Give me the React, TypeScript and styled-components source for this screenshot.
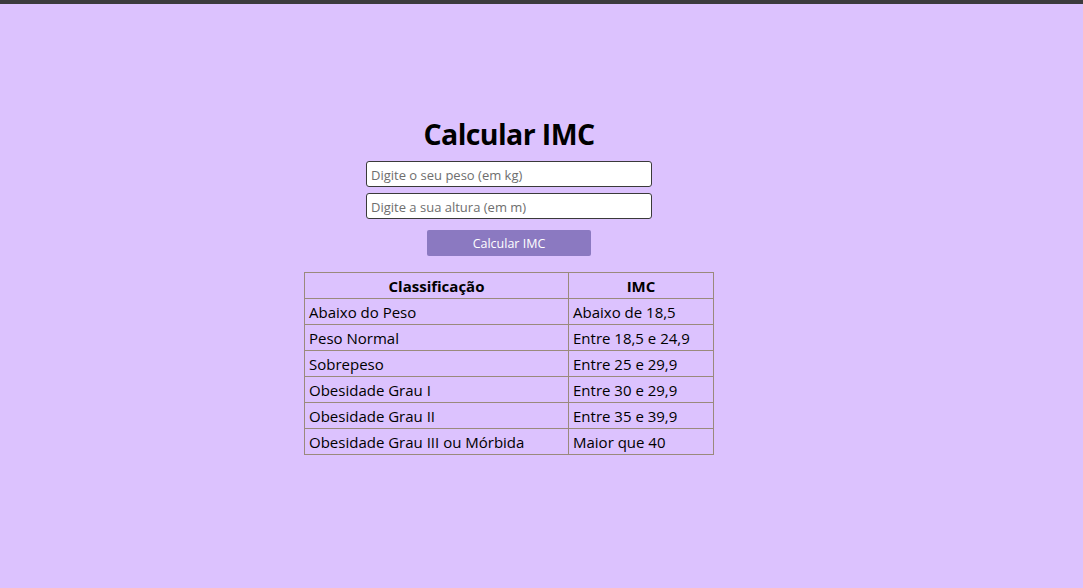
import React from "react";
import styled, { createGlobalStyle } from "styled-components";

const Global = createGlobalStyle`
  html, body { margin: 0; padding: 0; }
  body {
    background: #dcc2fe;
    font-family: "Open Sans", "Noto Sans", sans-serif;
    min-height: 588px;
  }
`;

const TopBar = styled.div`
  height: 4px;
  background: #3c3b3d;
`;

const Main = styled.main`
  display: flex;
  flex-direction: column;
  align-items: center;
  padding: 112px 65px 0 0;
`;

const Title = styled.h1`
  margin: 0 0 9px;
  font-size: 28.5px;
  font-weight: 700;
  line-height: 36px;
  color: #000;
  letter-spacing: -0.6px;
`;

const Form = styled.form`
  display: flex;
  flex-direction: column;
  align-items: center;
  gap: 6px;
`;

const Input = styled.input`
  box-sizing: border-box;
  width: 286px;
  height: 26px;
  border: 1px solid #3a3a3a;
  border-radius: 3px;
  padding: 1px 4px 0;
  font-family: "Open Sans", sans-serif;
  font-size: 13px;
  background: #fff;
  &::placeholder { color: #6e6e6e; }
`;

const Button = styled.button`
  margin-top: 5px;
  width: 164px;
  height: 26px;
  border: none;
  border-radius: 2px;
  background: #8b79c1;
  color: #fff;
  font-family: "Open Sans", sans-serif;
  font-size: 12.5px;
  padding-top: 1px;
`;

const Table = styled.table`
  margin-top: 16px;
  border-collapse: collapse;
  width: 410px;
  font-size: 15px;
  color: #000;
`;

const Th = styled.th<{ $w?: number }>`
  border: 1px solid #9a8a7c;
  height: 24px;
  padding: 1px 4px 0;
  line-height: 20px;
  font-weight: 700;
  text-align: center;
  width: ${(p) => (p.$w ? `${p.$w}px` : "auto")};
`;

const Td = styled.td`
  border: 1px solid #9a8a7c;
  height: 24px;
  padding: 1px 4px 0;
  line-height: 20px;
  text-align: left;
  white-space: nowrap;
`;

const rows: [string, string][] = [
  ["Abaixo do Peso", "Abaixo de 18,5"],
  ["Peso Normal", "Entre 18,5 e 24,9"],
  ["Sobrepeso", "Entre 25 e 29,9"],
  ["Obesidade Grau I", "Entre 30 e 29,9"],
  ["Obesidade Grau II", "Entre 35 e 39,9"],
  ["Obesidade Grau III ou Mórbida", "Maior que 40"],
];

export default function App() {
  return (
    <>
      <Global />
      <TopBar />
      <Main>
        <Title>Calcular IMC</Title>
        <Form onSubmit={(e) => e.preventDefault()}>
          <Input placeholder="Digite o seu peso (em kg)" />
          <Input placeholder="Digite a sua altura (em m)" />
          <Button type="submit">Calcular IMC</Button>
        </Form>
        <Table>
          <thead>
            <tr>
              <Th $w={255}>Classificação</Th>
              <Th>IMC</Th>
            </tr>
          </thead>
          <tbody>
            {rows.map(([a, b]) => (
              <tr key={a}>
                <Td>{a}</Td>
                <Td>{b}</Td>
              </tr>
            ))}
          </tbody>
        </Table>
      </Main>
    </>
  );
}
